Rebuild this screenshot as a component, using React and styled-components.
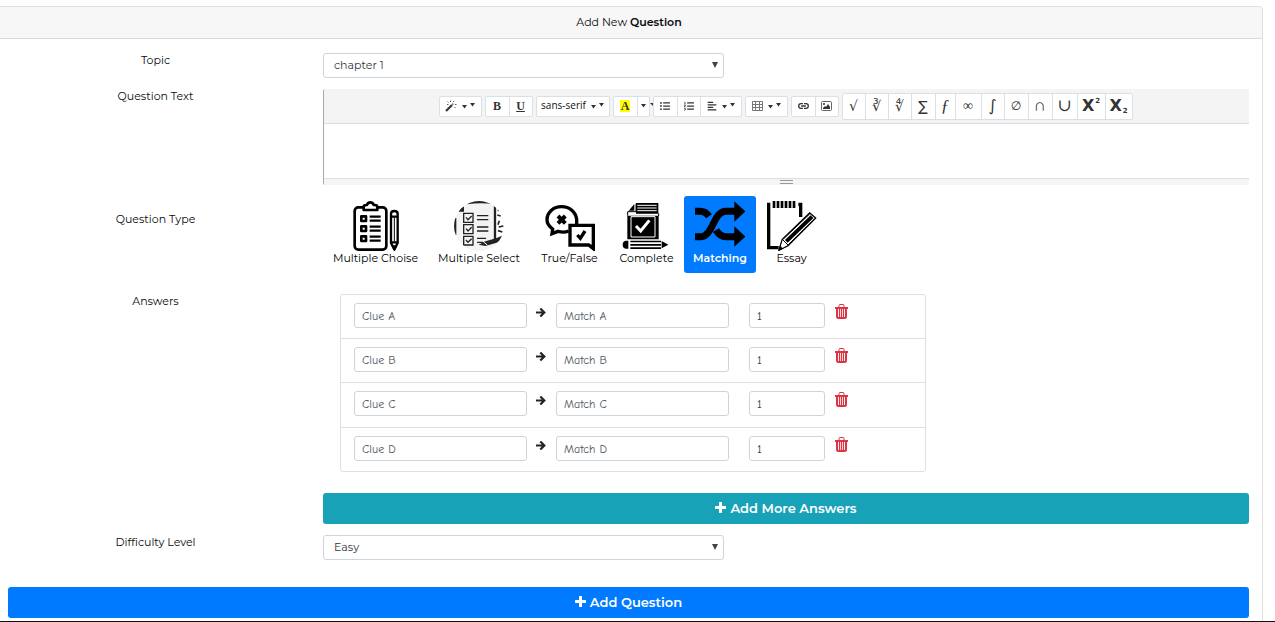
import React from "react";
import styled, { createGlobalStyle, css } from "styled-components";
import { FaListUl, FaListOl, FaAlignLeft } from "react-icons/fa";

const sans = `Montserrat, Inter, "Open Sans", sans-serif`;
const hand = `"Comic Neue", Lato, "Open Sans", sans-serif`;
const serif = `"Liberation Serif", "DejaVu Serif", serif`;

const GlobalStyle = createGlobalStyle`
  *, *::before, *::after { box-sizing: border-box; }
  body { margin: 0; background: #fff; color: #080b0d; font: 11px/14px ${sans}; }
  button, input, select, textarea { font: inherit; color: inherit; margin: 0; }
  svg { display: block; flex: none; }
`;

const Page = styled.main`
  padding-top: 6px;
  border-bottom: 1px solid #111;
`;

const Card = styled.form`
  margin-right: 12px;
  border: 1px solid #dfdfdf;
  border-left: 0;
  border-bottom: 0;
  border-top-right-radius: 4px;
`;

const CardHeader = styled.h1`
  margin: 0;
  padding: 8px 12px 9px 8px;
  background: #f7f7f7;
  border-bottom: 1px solid #dadada;
  border-top-right-radius: 3px;
  font-size: 11px;
  line-height: 14px;
  font-weight: 400;
  text-align: center;
  b { font-weight: 600; }
`;

const CardBody = styled.div`
  padding: 14px 13px 3px 8px;
`;

const Row = styled.div`
  display: grid;
  grid-template-columns: minmax(0, 295fr) minmax(0, 926fr);
  column-gap: 20px;
  margin-bottom: ${(p) => p.$gap}px;
`;

const labelStyle = css`
  text-align: center;
  font-weight: 400;
  padding-top: ${(p) => (p.$low ? 16 : 0)}px;
`;
const Label = styled.label`${labelStyle}`;
const LabelText = styled.div`${labelStyle}`;

const SelectWrap = styled.div`
  position: relative;
  max-width: 401px;
`;

const Select = styled.select`
  display: block;
  width: 100%;
  height: 25px;
  padding: 0 24px 2px 10px;
  appearance: none;
  border: 1px solid #ced4da;
  border-radius: 3px;
  background: #fff;
  color: #30373d;
  font-weight: 400;
`;

const SelectArrow = styled.svg`
  position: absolute;
  right: 6px;
  top: 9px;
  pointer-events: none;
`;

const Editor = styled.div`
  border-left: 1px solid #a9a9a9;
  border-radius: 2px;
  overflow: hidden;
`;

const Toolbar = styled.div`
  display: flex;
  justify-content: center;
  align-items: center;
  gap: 3px;
  height: 35px;
  padding-right: 2px;
  background: #f4f4f4;
  border-bottom: 1px solid #dcdcdc;
`;

const Group = styled.div`
  position: relative;
  display: flex;
  border: 1px solid #dae0e5;
  border-radius: 2px;
  background: #fff;
`;

const Tool = styled.button`
  display: flex;
  align-items: center;
  justify-content: center;
  gap: 5px;
  width: ${(p) => p.$w}px;
  height: ${(p) => (p.$tall ? 25 : 19)}px;
  padding: 0;
  border: 0;
  background: transparent;
  color: #333;
  & + & { border-left: 1px solid #dae0e5; }
`;

const Letter = styled.span`
  font: bold 12px/12px ${serif};
  text-decoration: ${(p) => (p.$underline ? "underline" : "none")};
  background: ${(p) => (p.$mark ? "#ff0" : "transparent")};
  padding: 0 ${(p) => (p.$mark ? 1 : 0)}px;
`;

const FontName = styled.span`
  font: 10px/14px "Open Sans", sans-serif;
  color: #111;
  padding-bottom: 2px;
`;

const MathSign = styled.span`
  font-size: ${(p) => p.$size}px;
  line-height: 20px;
  font-style: ${(p) => (p.$italic ? "italic" : "normal")};
  font-family: ${(p) => (p.$serif ? serif : `"DejaVu Sans", sans-serif`)};
`;

const ScriptX = styled.span`
  display: flex;
  gap: 1px;
  align-items: ${(p) => (p.$low ? "flex-end" : "flex-start")};
  font: bold 16px/18px "DejaVu Sans", sans-serif;
  span { font-size: 7px; line-height: 8px; }
`;

const StrayCaret = styled.svg`
  position: absolute;
  right: -4px;
  top: 6px;
`;

const TextArea = styled.textarea`
  display: block;
  width: 100%;
  height: 54px;
  padding: 8px;
  border: 0;
  resize: none;
  background: #fff;
`;

const StatusBar = styled.div`
  display: flex;
  justify-content: center;
  height: 7px;
  padding-top: 1px;
  background: #f5f5f5;
  border-top: 1px solid #ddd;
`;

const Grip = styled.span`
  width: 13px;
  height: 4px;
  border: solid #999;
  border-width: 1px 0;
`;

const Types = styled.div`
  display: flex;
  flex-wrap: wrap;
`;

const TypeButton = styled.button`
  display: flex;
  flex-direction: column;
  align-items: center;
  width: ${(p) => p.$w}px;
  height: 77px;
  padding: 5px 0 0;
  border: 0;
  border-radius: 3px;
  white-space: nowrap;
  background: ${(p) => (p.$active ? "#007bff" : "transparent")};
  color: ${(p) => (p.$active ? "#fff" : "#000")};
  font-weight: ${(p) => (p.$active ? 600 : 400)};
  svg { color: #000; }
`;

const AnswerList = styled.ul`
  list-style: none;
  margin: 0 0 0 17px;
  padding: 0;
  max-width: 586px;
  border: 1px solid #dfdfdf;
  border-radius: 3px;
`;

const AnswerItem = styled.li`
  display: flex;
  align-items: flex-start;
  height: 44px;
  padding: 8px 13px;
  &:first-child { height: 43px; }
  &:nth-child(3) { height: 45px; }
  & + & { border-top: 1px solid #dfdfdf; }
`;

const Input = styled.input`
  width: ${(p) => p.$w}px;
  height: 25px;
  padding: 1px 7px 0;
  border: 1px solid #ced4da;
  border-radius: 3px;
  background: #fff;
  color: #343a40;
  font: 12px/16px ${hand};
  &::placeholder { color: #50585f; opacity: 1; }
`;

const Arrow = styled.span`
  display: flex;
  justify-content: center;
  width: 29px;
  padding: 4px 1px 0 0;
`;

const Points = styled.span`
  display: flex;
  margin-left: 20px;
`;

const Delete = styled.button`
  margin-left: 10px;
  padding: 1px 0 0;
  border: 0;
  background: transparent;
  color: #dc3545;
`;

const Wide = styled.button`
  display: flex;
  align-items: center;
  justify-content: center;
  gap: 4px;
  width: 100%;
  height: 31px;
  padding: 0 0 2px;
  border: 0;
  border-radius: 3px;
  background: ${(p) => (p.$primary ? "#007bff" : "#17a2b8")};
  color: #fff;
  font-size: 13px;
  font-weight: 600;
`;

const Caret = () => (
  <svg width="13" height="8" viewBox="0 0 13 8" fill="currentColor">
    <path d="M0 3h5L2.500 6.500zM8 1h5L10.500 4.500z" />
  </svg>
);

const PlusIcon = () => (
  <svg width="11" height="11" viewBox="0 0 11 11" fill="currentColor">
    <path d="M4.500 0h2q.5 0 .5.500V4h3.500q.5 0 .5.500v2q0 .5-.5.500H7v3.500q0 .5-.5.500h-2q-.5 0-.5-.5V7H.5Q0 7 0 6.500v-2Q0 4 .5 4H4V.5q0-.5.500-.5z" />
  </svg>
);

const ArrowIcon = () => (
  <svg width="10" height="10" viewBox="0 0 10 10" fill="none" stroke="#212529" strokeWidth="2.200">
    <path d="M0 5.500h8M4.300 1.500L8.300 5.500l-4 4" />
  </svg>
);

const WandIcon = () => (
  <svg width="12" height="12" viewBox="0 0 12 12" fill="none" stroke="#333">
    <path d="M1 11l6-6" strokeWidth="2.200" />
    <path d="M7.200 4.800l1.200-1.200" strokeWidth="1.600" stroke="#777" />
    <path d="M5.500.500v1.500M2.500 1.500l1 1M9 1l-.8 1M10 4.500h1.500M9.500 7l1 1M2 4.500h1.500" strokeWidth=".8" />
  </svg>
);

const TableIcon = () => (
  <svg width="11" height="10" viewBox="0 0 11 10" fill="none" stroke="#777">
    <path d="M.5.500h10v9H.5zM.5 3.500h10M.5 6.500h10M3.500.5v9M7.500.5v9" />
  </svg>
);

const LinkIcon = () => (
  <svg width="11" height="8" viewBox="0 0 11 8" fill="none" stroke="#333" strokeWidth="1.300">
    <path d="M5 1.700H3a2.300 2.300 0 0 0 0 4.600h2M6 1.700h2a2.300 2.300 0 0 1 0 4.600H6M3.200 4h4.600" />
  </svg>
);

const PictureIcon = () => (
  <svg width="11" height="10" viewBox="0 0 11 10">
    <rect x=".5" y=".5" width="10" height="9" rx="1" fill="none" stroke="#666" />
    <path d="M2 8V7l2-2 1 1 2-3 2 3v2z" fill="#333" />
    <circle cx="3" cy="3" r="1" fill="#333" />
  </svg>
);

const ClipboardIcon = () => (
  <svg width="50" height="50" viewBox="94 33 150 150" fill="none" stroke="currentColor" strokeWidth="8" strokeLinejoin="round">
    <rect x="105" y="52" width="95" height="127" rx="11" />
    <path d="M132 60V50q0-5 8-5h2q2-8 10-8t10 8h3q8 0 8 6v9z" fill="#fff" />
    <path d="M125 79h14v14h-14zM125 109h14v14h-14zM125 139h14v14h-14z" />
    <path d="M150 80h33M150 92h33M150 110h33M150 122h33M150 140h33M150 152h33" strokeWidth="7" />
    <path d="M214 71q0-8 10-8t10 8v88l-10 19-10-19zM214 80h20M214 157h20" strokeWidth="7" />
    <path d="M224 82v73" strokeWidth="3" />
    <path d="M218 168h13l-7 13z" fill="currentColor" strokeWidth="4" />
  </svg>
);

const ChecklistIcon = () => (
  <svg width="50" height="50" viewBox="402 33 150 150" fill="none" stroke="#222">
    <clipPath id="round"><circle cx="477" cy="108" r="75" /></clipPath>
    <g clipPath="url(#round)">
      <path d="M402 33h150v150H402z" fill="#f3f3f3" stroke="none" />
      <path d="M528 40h30v130h-30z" fill="#fff" stroke="none" />
      <path d="M398 84h11v50h-11zM416 60l16-12v17h-16z" fill="#222" stroke="none" />
      <path d="M440 39q44-6 85 0v112" strokeWidth="7" />
      <path d="M431 70h28v27h-28zM431 104h28v27h-28zM431 139h28v26h-28z" strokeWidth="4" />
      <path d="M438 82l6 7 11-11M438 116l6 7 11-11M438 150l6 7 11-11" strokeWidth="4" />
      <path d="M471 77h34M471 89h34M471 111h34M471 123h34M471 145h27M471 157h18" strokeWidth="4" />
      <path d="M476 164l20-10 32-9 18-8 4 9-20 12-34 10z" fill="#222" stroke="none" />
      <path d="M492 157l10 8" stroke="#fff" strokeWidth="3" />
      <path d="M533 62l8-4M532 75l10 3M538 92l-4 12M536 111l14-3M534 122l13 4" strokeWidth="5" />
    </g>
  </svg>
);

const SpeechIcon = () => (
  <svg width="50" height="50" viewBox="75 33 150 150" fill="none" stroke="currentColor" strokeWidth="10">
    <path d="M146 123q-14 6-32 1l-18 7 2-14c-12-9-17-18-17-28 0-22 19-39 44-39 24 0 42 16 45 38v14" />
    <path d="M114 78l22 22M136 78l-22 22" strokeWidth="12" />
    <path d="M150 106h70v70l-14-11h-56z" fill="#fff" />
    <path d="M172 135l9 10 14-22" strokeWidth="10" />
    <path d="M204 164h20v19z" fill="currentColor" stroke="none" />
  </svg>
);

const CompleteIcon = () => (
  <svg width="50" height="50" viewBox="308 33 150 150" fill="currentColor">
    <path d="M350 39h67v32h-67zM324 77h94v71h-94zM328 62l17-20v20z" />
    <path d="M354 46h58M354 54h58M354 62h58" stroke="#fff" strokeWidth="3" />
    <path d="M350 41v24h-25v12M418 70v8" fill="none" stroke="currentColor" strokeWidth="3" />
    <path d="M335 80h72v61h-72z" fill="none" stroke="#fff" strokeWidth="3" />
    <path d="M350 108l14 15 26-32" fill="none" stroke="#fff" strokeWidth="9" />
    <path d="M327 152h-8q-9 2-9 12t9 12h8zM333 152h92v5h-92zM333 162h92v5h-92zM333 172h92v5h-92zM427 153l20 11-20 11z" />
  </svg>
);

const ShuffleIcon = () => (
  <svg width="50" height="50" viewBox="45 33 150 150" fill="none" stroke="currentColor" strokeWidth="21">
    <path d="M45 140h16c39 0 38-76 77-76h29" />
    <path d="M45 64h15c12 0 20 5 27 15M108 120c7 13 16 20 30 20h29" />
    <path d="M163 34l33 30-33 31zM163 109l33 31-33 30z" fill="currentColor" stroke="none" />
  </svg>
);

const EssayIcon = () => (
  <svg width="50" height="50" viewBox="262 33 150 150" fill="none" stroke="currentColor">
    <path d="M272 43h-5v130h30M356 43h7v38" strokeWidth="10" />
    <path d="M283 33v21M295 33v21M307 33v21M319 33v21M331 33v21M343 33v21" strokeWidth="8" />
    <path d="M298 180l10-32 82-79 18 15-83 83z" fill="#fff" strokeWidth="4" />
    <path d="M320 154l77-74" strokeWidth="12" />
    <path d="M311 147l79-75M327 163l78-75" strokeWidth="3" />
    <path d="M308 148l18 18-28 15z" fill="#fff" strokeWidth="3" />
    <path d="M298 181l4-13 8 8z" fill="currentColor" />
  </svg>
);

const TrashIcon = () => (
  <svg width="13" height="15" viewBox="0 0 13 15" fill="none" stroke="currentColor">
    <path d="M4 3V1.500q0-1 1-1h3q1 0 1 1V3" />
    <path d="M0 3h13v2H0z" fill="currentColor" stroke="none" />
    <path d="M2 4v8.500q0 1.500 1.500 1.500h6q1.500 0 1.500-1.500V4" strokeWidth="2" />
    <path d="M4.500 5v8M6.500 5v8M8.500 5v8" strokeWidth="1.200" />
  </svg>
);

const mathTools = [
  { name: "Square root", sign: "√", w: 22, size: 14, italic: true },
  { name: "Cube root", sign: "∛", w: 23, size: 14 },
  { name: "Fourth root", sign: "∜", w: 23, size: 14 },
  { name: "Sum", sign: "∑", w: 24, size: 14 },
  { name: "Function", sign: "ƒ", w: 20, size: 17, serif: true, italic: true },
  { name: "Infinity", sign: "∞", w: 26, size: 14, serif: true },
  { name: "Integral", sign: "∫", w: 23, size: 16, italic: true },
  { name: "Empty set", sign: "∅", w: 24, size: 12 },
  { name: "Intersection", sign: "∩", w: 24, size: 17, serif: true },
  { name: "Union", sign: "∪", w: 25, size: 17, serif: true },
];

const types = [
  { name: "Multiple Choise", w: 105, Icon: ClipboardIcon },
  { name: "Multiple Select", w: 102, Icon: ChecklistIcon },
  { name: "True/False", w: 79, Icon: SpeechIcon },
  { name: "Complete", w: 75, Icon: CompleteIcon },
  { name: "Matching", w: 72, Icon: ShuffleIcon },
  { name: "Essay", w: 71, Icon: EssayIcon },
];

function Dropdown({ id, options }) {
  return (
    <SelectWrap>
      <Select id={id}>
        {options.map((o) => <option key={o}>{o}</option>)}
      </Select>
      <SelectArrow width="6" height="6" viewBox="0 0 6 6" fill="#3d444b"><path d="M0 0h6L3 6z" /></SelectArrow>
    </SelectWrap>
  );
}

function EditorToolbar() {
  return (
    <Toolbar role="toolbar" aria-label="Text formatting">
      <Group><Tool type="button" $w={41} aria-label="Style"><WandIcon /><Caret /></Tool></Group>
      <Group>
        <Tool type="button" $w={23} aria-label="Bold"><Letter>B</Letter></Tool>
        <Tool type="button" $w={23} aria-label="Underline"><Letter $underline>U</Letter></Tool>
      </Group>
      <Group><Tool type="button" $w={72}><FontName>sans-serif</FontName><Caret /></Tool></Group>
      <Group>
        <Tool type="button" $w={23} aria-label="Highlight"><Letter $mark>A</Letter></Tool>
        <Tool type="button" $w={12} aria-label="More colors">
          <svg width="5" height="4" viewBox="0 0 5 4" fill="currentColor"><path d="M0 0h5L2.500 3.500z" /></svg>
        </Tool>
        <StrayCaret width="3" height="4" viewBox="0 0 3 4" fill="#333"><path d="M0 0h3v3z" /></StrayCaret>
      </Group>
      <Group>
        <Tool type="button" $w={23} aria-label="Bulleted list"><FaListUl size={10} /></Tool>
        <Tool type="button" $w={23} aria-label="Numbered list"><FaListOl size={10} /></Tool>
        <Tool type="button" $w={41} aria-label="Paragraph"><FaAlignLeft size={10} /><Caret /></Tool>
      </Group>
      <Group><Tool type="button" $w={41} aria-label="Table"><TableIcon /><Caret /></Tool></Group>
      <Group>
        <Tool type="button" $w={23} aria-label="Link"><LinkIcon /></Tool>
        <Tool type="button" $w={23} aria-label="Picture"><PictureIcon /></Tool>
      </Group>
      <Group>
        {mathTools.map((m) => (
          <Tool key={m.name} type="button" $tall $w={m.w} aria-label={m.name}>
            <MathSign $size={m.size} $serif={m.serif} $italic={m.italic}>{m.sign}</MathSign>
          </Tool>
        ))}
        <Tool type="button" $tall $w={28} aria-label="Superscript"><ScriptX>X<span>2</span></ScriptX></Tool>
        <Tool type="button" $tall $w={27} aria-label="Subscript"><ScriptX $low>X<span>2</span></ScriptX></Tool>
      </Group>
    </Toolbar>
  );
}

export default function App() {
  return (
    <>
      <GlobalStyle />
      <Page>
        <Card onSubmit={(e) => e.preventDefault()}>
          <CardHeader>Add New <b>Question</b></CardHeader>
          <CardBody>
            <Row $gap={11}>
              <Label htmlFor="topic">Topic</Label>
              <Dropdown id="topic" options={["chapter 1"]} />
            </Row>
            <Row $gap={11}>
              <Label htmlFor="question">Question Text</Label>
              <Editor>
                <EditorToolbar />
                <TextArea id="question" />
                <StatusBar><Grip /></StatusBar>
              </Editor>
            </Row>
            <Row $gap={21}>
              <LabelText id="type-label" $low>Question Type</LabelText>
              <Types role="group" aria-labelledby="type-label">
                {types.map(({ name, w, Icon }) => (
                  <TypeButton key={name} type="button" $w={w} $active={name === "Matching"} aria-pressed={name === "Matching"}>
                    <Icon />
                    {name}
                  </TypeButton>
                ))}
              </Types>
            </Row>
            <Row $gap={21}>
              <LabelText id="answers-label">Answers</LabelText>
              <AnswerList aria-labelledby="answers-label">
                {["A", "B", "C", "D"].map((l) => (
                  <AnswerItem key={l}>
                    <Input $w={173} placeholder={`Clue ${l}`} aria-label={`Clue ${l}`} />
                    <Arrow><ArrowIcon /></Arrow>
                    <Input $w={173} placeholder={`Match ${l}`} aria-label={`Match ${l}`} />
                    <Points><Input $w={76} defaultValue="1" aria-label={`Points ${l}`} /></Points>
                    <Delete type="button" aria-label={`Delete ${l}`}><TrashIcon /></Delete>
                  </AnswerItem>
                ))}
              </AnswerList>
            </Row>
            <Row $gap={11}>
              <span />
              <Wide type="button"><PlusIcon />Add More Answers</Wide>
            </Row>
            <Row $gap={27}>
              <Label htmlFor="difficulty">Difficulty Level</Label>
              <Dropdown id="difficulty" options={["Easy", "Medium", "Hard"]} />
            </Row>
            <Wide type="submit" $primary><PlusIcon />Add Question</Wide>
          </CardBody>
        </Card>
      </Page>
    </>
  );
}
